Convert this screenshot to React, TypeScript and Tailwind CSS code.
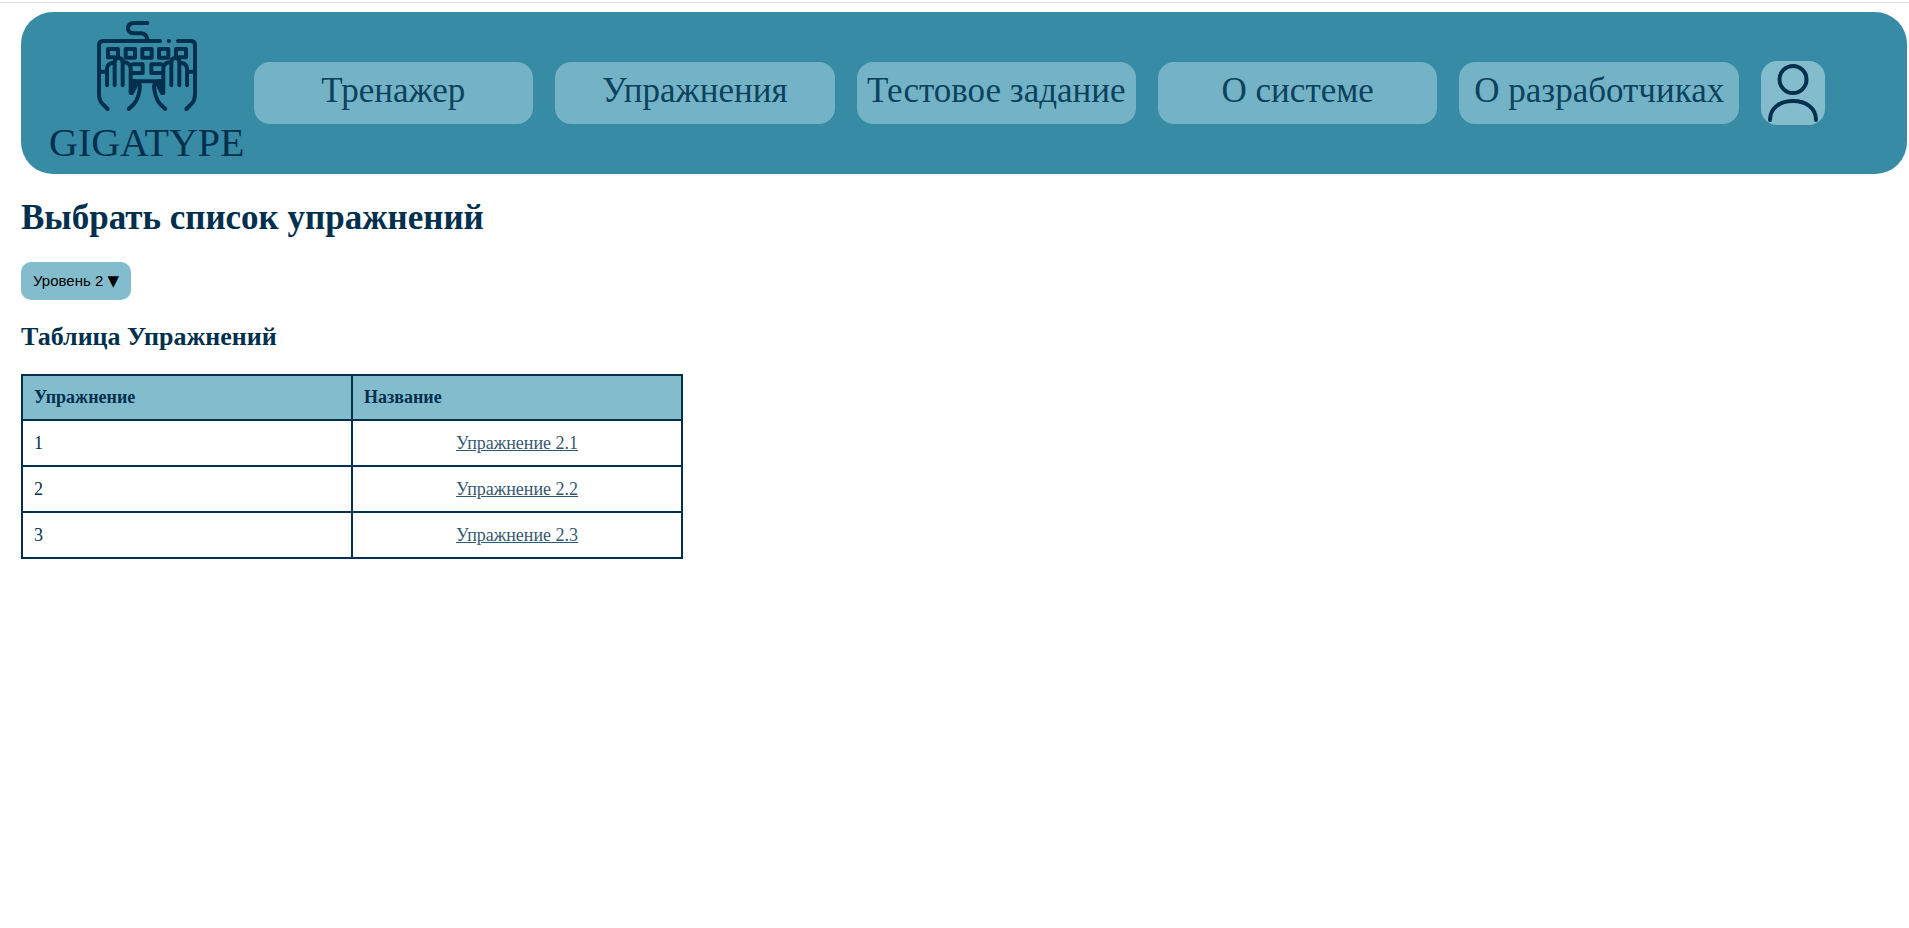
import React from "react";

const navItems = ["Тренажер", "Упражнения", "Тестовое задание", "О системе", "О разработчиках"];

const exercises = [
  { id: 1, title: "Упражнение 2.1" },
  { id: 2, title: "Упражнение 2.2" },
  { id: 3, title: "Упражнение 2.3" },
];

function HandHalf() {
  return (
    <g>
      <path d="M57 130V251Q57 271 67 281L83 297" />
      <path d="M57 185H78" />
      <path d="M81 226V175Q82 160 100 158" />
      <path d="M104 226V154Q105 144 115 144Q126 144 128 154V226" />
      <path d="M128 157Q148 155 152 173V249" />
      <path d="M158 163H188V189H158" />
      <path d="M152 210H164L161 234L153 250Z" fill="currentColor" strokeWidth="6" />
      <path d="M146 297L162 282Q177 264 180 230Q181 223 174 223Q168 223 165 232L156 249" />
      <path d="M84 142V117H114V140" />
      <path d="M84 142H104" />
      <rect x="137" y="117" width="28" height="26" />
    </g>
  );
}

function KeyboardLogo() {
  return (
    <svg
      viewBox="51 30 300 300"
      className="size-[100px]"
      fill="none"
      stroke="currentColor"
      strokeWidth="12"
      strokeLinecap="round"
      strokeLinejoin="round"
      aria-hidden="true"
    >
      <path d="M202 39H162Q144 40 144 55Q144 69 162 70H184Q201 71 202 92" />
      <path d="M57 135V105Q57 93 70 93H240" />
      <path d="M266 93H267" />
      <path d="M294 93H333Q345 93 345 105V135" />
      <rect x="187" y="117" width="28" height="26" />
      <path d="M158 214H244" />
      <HandHalf />
      <g transform="matrix(-1 0 0 1 402 0)">
        <HandHalf />
      </g>
    </svg>
  );
}

function UserIcon() {
  return (
    <svg
      viewBox="0 0 64 64"
      className="size-full"
      fill="none"
      stroke="currentColor"
      strokeWidth="4"
      strokeLinecap="round"
      aria-hidden="true"
    >
      <circle cx="32" cy="18.5" r="13.5" />
      <path d="M9 59C9 47 19 40 32 40S55 47 55 59" />
    </svg>
  );
}

export default function App() {
  return (
    <div className="mt-[2px] border-t border-[#dedede] pt-[9px] pr-[2px] pb-8 pl-[21px] font-['Liberation_Serif',serif] text-[#00304d]">
      <header className="flex items-center gap-[9px] rounded-[32px] bg-[#388ba5] py-2 pr-[82px] pl-7">
        <a href="#" className="flex flex-col items-center text-[40px] leading-[46px]">
          <KeyboardLogo />
          GIGATYPE
        </a>
        <nav className="flex min-w-0 flex-1 items-center gap-[22px]">
          {navItems.map((item) => (
            <a
              key={item}
              href="#"
              className="flex-1 rounded-[16px] bg-[#83bdcd] pt-[9px] pb-[13px] text-center text-[35px] leading-[40px] whitespace-nowrap opacity-80"
            >
              {item}
            </a>
          ))}
          <a href="#" aria-label="Профиль" className="size-16 shrink-0 rounded-[16px] bg-[#83bdcd]">
            <UserIcon />
          </a>
        </nav>
      </header>

      <main>
        <h1 className="mt-6 text-[35px] leading-[40px] font-bold">Выбрать список упражнений</h1>
        <button
          type="button"
          className="mt-6 block rounded-[10px] bg-[#83bdcd] px-3 py-[10px] font-['Liberation_Sans',sans-serif] text-[15px] leading-[18px] text-black"
        >
          Уровень 2 <span className="font-['DejaVu_Sans',sans-serif]">▼</span>
        </button>
        <h2 className="mt-[22px] text-[26px] leading-[30px] font-bold">Таблица Упражнений</h2>
        <table className="mt-[22px] w-[calc(35%+2px)] table-fixed border-collapse text-[18px] leading-[20px]">
          <thead>
            <tr className="bg-[#83bdcd] text-left">
              <th className="border-2 border-[#00304d] px-[11px] pt-[11px] pb-3 font-bold">Упражнение</th>
              <th className="border-2 border-[#00304d] px-[11px] pt-[11px] pb-3 font-bold">Название</th>
            </tr>
          </thead>
          <tbody>
            {exercises.map((exercise) => (
              <tr key={exercise.id}>
                <td className="border-2 border-[#00304d] px-[11px] py-3">{exercise.id}</td>
                <td className="border-2 border-[#00304d] px-[11px] py-3 text-center">
                  <a href="#" className="underline opacity-80">
                    {exercise.title}
                  </a>
                </td>
              </tr>
            ))}
          </tbody>
        </table>
      </main>
    </div>
  );
}
